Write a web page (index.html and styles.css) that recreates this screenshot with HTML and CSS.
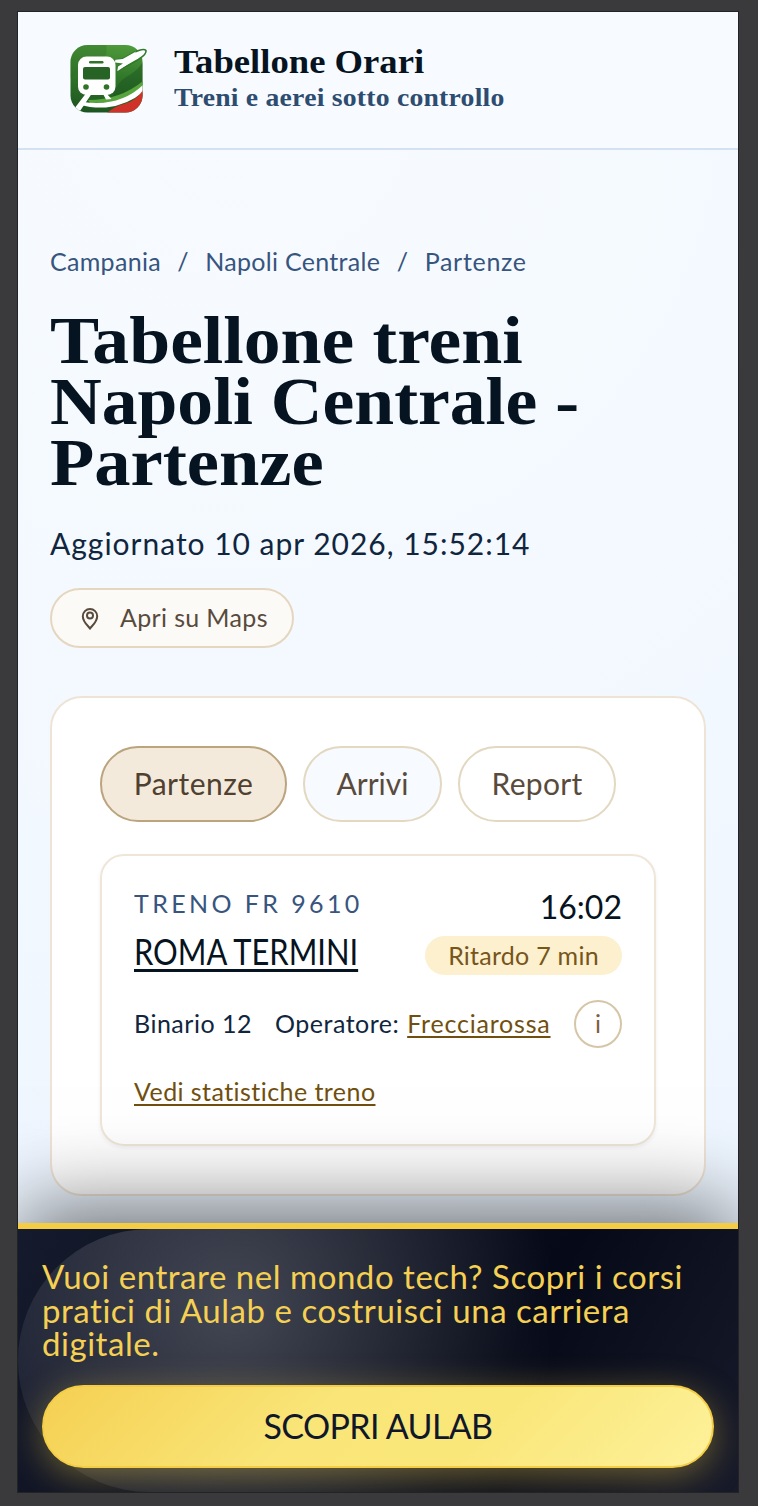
FILE: index.html
```html
<!DOCTYPE html>
<html lang="it">
<head>
    <meta charset="UTF-8">
    <meta name="viewport" content="width=device-width, initial-scale=1.0">
    <title>Tabellone treni Napoli Centrale - Partenze</title>
    <link rel="stylesheet" href="styles.css">
</head>
<body>
    <div class="page">
        <header class="site-header">
            <svg class="logo" viewBox="0 0 78 70" aria-hidden="true">
                <defs>
                    <linearGradient id="green" x1="0.5" y1="0" x2="0.4" y2="1">
                        <stop offset="0" stop-color="#4f9a3a"/>
                        <stop offset="0.5" stop-color="#2f7429"/>
                        <stop offset="1" stop-color="#1c5420"/>
                    </linearGradient>
                    <clipPath id="tile"><rect x="0.5" y="1" width="72" height="67.5" rx="17"/></clipPath>
                </defs>
                <g clip-path="url(#tile)">
                    <rect width="78" height="70" fill="url(#green)"/>
                    <path d="M36 0q2 12-3 14L0 34V0z" fill="#2b6b27" opacity=".3"/>
                    <path d="M73 18C62 34 54 30 46 44l-6 14h33z" fill="#1b5220" opacity=".45"/>
                    <path d="M18 56Q50 56 73 37V42Q56 60 20 59z" fill="#57a53c"/>
                    <path d="M13 58Q50 63 73 41V48Q58 61 36 63.500Q20 64 11 61z" fill="#fff"/>
                    <path d="M37 69Q45 62 54 60Q67 56 73 46V70H37z" fill="#cf3228"/>
                    <path d="M15.500 50h6L10 67l-6-2zM33 50h4l4.500 5-5.500.500z" fill="#fff"/>
                </g>
                <path d="M45.300 15.700L52.700 15L66 7.500Q74 4 76 6.500Q77 10 68.300 15.500L61.700 19.300L47.300 27.300L48 22.500L53 19.500L46 18.500z" fill="#fff" stroke="#2f7a2b" stroke-width="1.600"/>
                <path d="M45.300 15.700L52.700 15L66 7.500L61 18L47.300 27.300L48 22.500L53 19.500L45 18.500z" fill="#fff"/>
                <rect x="8" y="12.500" width="37.500" height="38.500" rx="8.500" fill="#fff"/>
                <rect x="19" y="17" width="14.500" height="2.500" rx="1.200" fill="#2f7429"/>
                <rect x="13" y="23" width="27" height="12.500" rx="2" fill="#276325"/>
                <circle cx="16" cy="43" r="2.800" fill="#2f7429"/>
                <circle cx="36.500" cy="43" r="2.800" fill="#2f7429"/>
            </svg>
            <div class="brand">
                <div class="brand-name">Tabellone Orari</div>
                <div class="brand-tagline">Treni e aerei sotto controllo</div>
            </div>
        </header>

        <main class="content">
            <nav class="breadcrumb">
                <span>Campania</span>
                <span>/</span>
                <span>Napoli Centrale</span>
                <span>/</span>
                <span class="current">Partenze</span>
            </nav>
            <h1>
                <span class="title-kind">Tabellone treni</span>
                <span class="title-station">Napoli Centrale -</span>
                <span class="title-board">Partenze</span>
            </h1>
            <p class="updated">Aggiornato 10 apr 2026, 15:52:14</p>
            <a class="maps">
                <svg width="24" height="24" viewBox="0 0 24 24" fill="none" stroke="currentColor" stroke-width="2">
                    <path d="M12 22.500c-1.500-2.200-7.200-6.500-7.200-12.300a7.200 7.200 0 0 1 14.400 0c0 5.800-5.700 10.100-7.200 12.300z"/>
                    <circle cx="12" cy="9.500" r="3"/>
                </svg>
                <span>Apri su Maps</span>
            </a>

            <section class="board">
                <div class="tabs">
                    <a class="tab active">Partenze</a>
                    <a class="tab arrivals">Arrivi</a>
                    <a class="tab report">Report</a>
                </div>
                <article class="train">
                    <div class="train-top">
                        <div>
                            <div class="train-number">TRENO FR 9610</div>
                            <a class="destination">ROMA TERMINI</a>
                        </div>
                        <div class="train-status">
                            <div class="time">16:02</div>
                            <span class="delay">Ritardo 7 min</span>
                        </div>
                    </div>
                    <div class="train-meta">
                        <span class="platform">Binario 12</span>
                        <span class="operator">Operatore: <a class="link">Frecciarossa</a></span>
                        <button class="info">i</button>
                    </div>
                    <a class="link stats">Vedi statistiche treno</a>
                </article>
            </section>
        </main>

        <aside class="promo">
            <p>Vuoi entrare nel mondo tech? Scopri i corsi<br>pratici di Aulab e costruisci una carriera<br>digitale.</p>
            <a class="promo-button">SCOPRI AULAB</a>
        </aside>
    </div>
</body>
</html>
```
FILE: styles.css
```css
* {
    box-sizing: border-box;
}
body {
    margin: 0;
    height: 1506px;
    padding: 12px 20px 14px 18px;
    background: #3a393c;
    font-family: Lato, "Open Sans", sans-serif;
    font-variant-ligatures: none;
    color: #061320;
}
.page {
    height: 1480px;
    display: flex;
    flex-direction: column;
    overflow: hidden;
    background: radial-gradient(circle at 30% 5%, #f7fbff 0%, #f4f9ff 40%, #ebf4ff 100%);
    outline: 1px solid #222326;
}
.site-header {
    display: flex;
    flex: none;
    height: 138px;
    padding: 32px 52px;
    gap: 26px;
    background: #f7fbff;
    border-bottom: 2px solid #d3e1f0;
}
.logo {
    width: 78px;
    height: 70px;
}
.brand {
    font-family: "Liberation Serif", serif;
    font-weight: bold;
    white-space: nowrap;
}
/* the serif is widened a little, line by line */
.brand-name,
.brand-tagline,
h1 span {
    display: block;
    transform-origin: left;
}
.brand-name {
    font-size: 34px;
    line-height: 36px;
    transform: scaleX(1.078);
}
.brand-tagline {
    font-size: 25px;
    line-height: 36px;
    letter-spacing: 0.2px;
    color: #2e4c70;
    transform: scaleX(1.108);
}
.content {
    flex: 1;
    padding: 95px 32px 0;
}
.breadcrumb {
    display: flex;
    gap: 16.4px;
    font-size: 25px;
    line-height: 32px;
    letter-spacing: 0.3px;
    color: #37557e;
}
.current {
    letter-spacing: 0.7px;
}
h1 {
    margin: 33px 0 0;
    font-family: "Liberation Serif", serif;
    font-size: 68px;
    line-height: 61px;
    white-space: nowrap;
}
.title-kind {
    transform: scaleX(1.083);
}
.title-station {
    transform: scaleX(1.053);
}
.title-board {
    transform: scaleX(1.066);
}
.updated {
    margin: 32px 0 0;
    font-size: 30px;
    line-height: 36px;
    letter-spacing: 0.98px;
    color: #10263e;
}
.maps {
    display: flex;
    align-items: center;
    width: 244px;
    height: 60px;
    margin-top: 27px;
    padding-left: 26px;
    gap: 18px;
    border: 2px solid #e5d7bf;
    border-radius: 30px;
    background: #fcfaf6;
    color: #594b3c;
    font-size: 25px;
    letter-spacing: 0.35px;
    white-space: nowrap;
}
.maps span {
    padding-bottom: 2px;
}
.board {
    height: 500px;
    margin-top: 48px;
    padding: 48px;
    background: #fff;
    border: 2px solid #eee4d6;
    border-radius: 32px;
}
.tabs {
    display: flex;
    gap: 16px;
}
.tab {
    display: flex;
    align-items: center;
    justify-content: center;
    height: 76px;
    padding-bottom: 2px;
    border: 2px solid #e3d8c0;
    border-radius: 38px;
    color: #594b3c;
    font-size: 30px;
}
.tab.active {
    width: 187px;
    background: #f3eadb;
    border-color: #bba47e;
    color: #4f4030;
    letter-spacing: 0.5px;
}
.arrivals {
    width: 139px;
    background: #f7faff;
}
.report {
    width: 158px;
    letter-spacing: 0.3px;
}
.train {
    width: 556px;
    height: 292px;
    margin-top: 32px;
    padding: 31px 32px;
    border: 2px solid #efe6d9;
    border-radius: 24px;
    box-shadow: 0 2px 4px rgba(0, 0, 0, 0.06);
    white-space: nowrap;
}
.train-top {
    display: flex;
    justify-content: space-between;
}
.train-number {
    font-size: 25px;
    line-height: 32px;
    letter-spacing: 3.4px;
    color: #37557e;
}
.destination {
    display: block;
    width: 262px;
    margin-top: 11px;
    font-size: 36px;
    line-height: 42px;
    text-decoration: underline;
    text-decoration-thickness: 3px;
    text-underline-offset: 4px;
    /* condensed station name */
    transform: scaleX(0.857);
    transform-origin: left;
}
.train-status {
    display: flex;
    flex-direction: column;
    align-items: flex-end;
}
.time {
    font-size: 32px;
    line-height: 40px;
}
.delay {
    display: flex;
    align-items: center;
    justify-content: center;
    width: 197px;
    height: 39px;
    margin-top: 9px;
    padding-bottom: 2px;
    border-radius: 20px;
    background: #fcf0cf;
    color: #77551b;
    font-size: 25px;
    letter-spacing: 0.25px;
}
.train-meta {
    display: flex;
    align-items: center;
    margin-top: 25px;
    font-size: 25px;
    letter-spacing: 0.5px;
    color: #10263e;
}
.platform {
    width: 141px;
}
.platform,
.operator {
    padding-bottom: 2px;
}
.link {
    color: #71500f;
    text-decoration: underline;
    text-decoration-thickness: 2px;
    text-underline-offset: 3px;
}
.operator .link {
    margin-left: 1px;
    letter-spacing: 0.8px;
}
.info {
    width: 48px;
    height: 48px;
    margin-left: auto;
    padding: 0 0 2px;
    border: 2px solid #d6c6a8;
    border-radius: 50%;
    background: #fff;
    color: #806040;
    font: inherit;
}
.stats {
    display: block;
    margin-top: 27px;
    font-size: 25px;
    line-height: 32px;
    letter-spacing: 0.44px;
}
.promo {
    position: relative;
    isolation: isolate;
    flex: none;
    height: 269px;
    padding: 31px 24px 24px;
    border-top: 6px solid #f4cd45;
    background: linear-gradient(120deg, #151a2c 0%, #070b19 60%, #060a18 65%, #171a2a 100%);
    box-shadow: 0 -16px 80px rgba(0, 0, 0, 0.55);
}
.promo::before {
    content: "";
    position: absolute;
    inset: 0;
    z-index: -1;
    border-radius: 132px;
    background: radial-gradient(circle at 30% 30%, rgba(255, 255, 255, 0.22) 0%, rgba(255, 255, 255, 0) 60%);
}
.promo p {
    margin: 0;
    font-size: 33px;
    line-height: 33.5px;
    letter-spacing: 0.53px;
    color: #f5d052;
    white-space: nowrap;
}
.promo-button {
    display: flex;
    align-items: center;
    justify-content: center;
    height: 83px;
    margin-top: 24.5px;
    padding-bottom: 2px;
    border: 2px solid #f4cd45;
    border-radius: 42px;
    background: linear-gradient(135deg, #f5d052 0%, #f9e578 40%, #fae77a 65%, #fdf19a 100%);
    box-shadow: 0 8px 36px rgba(245, 208, 72, 0.4);
    color: #11172a;
    font-size: 34px;
    letter-spacing: -0.65px;
}
```
